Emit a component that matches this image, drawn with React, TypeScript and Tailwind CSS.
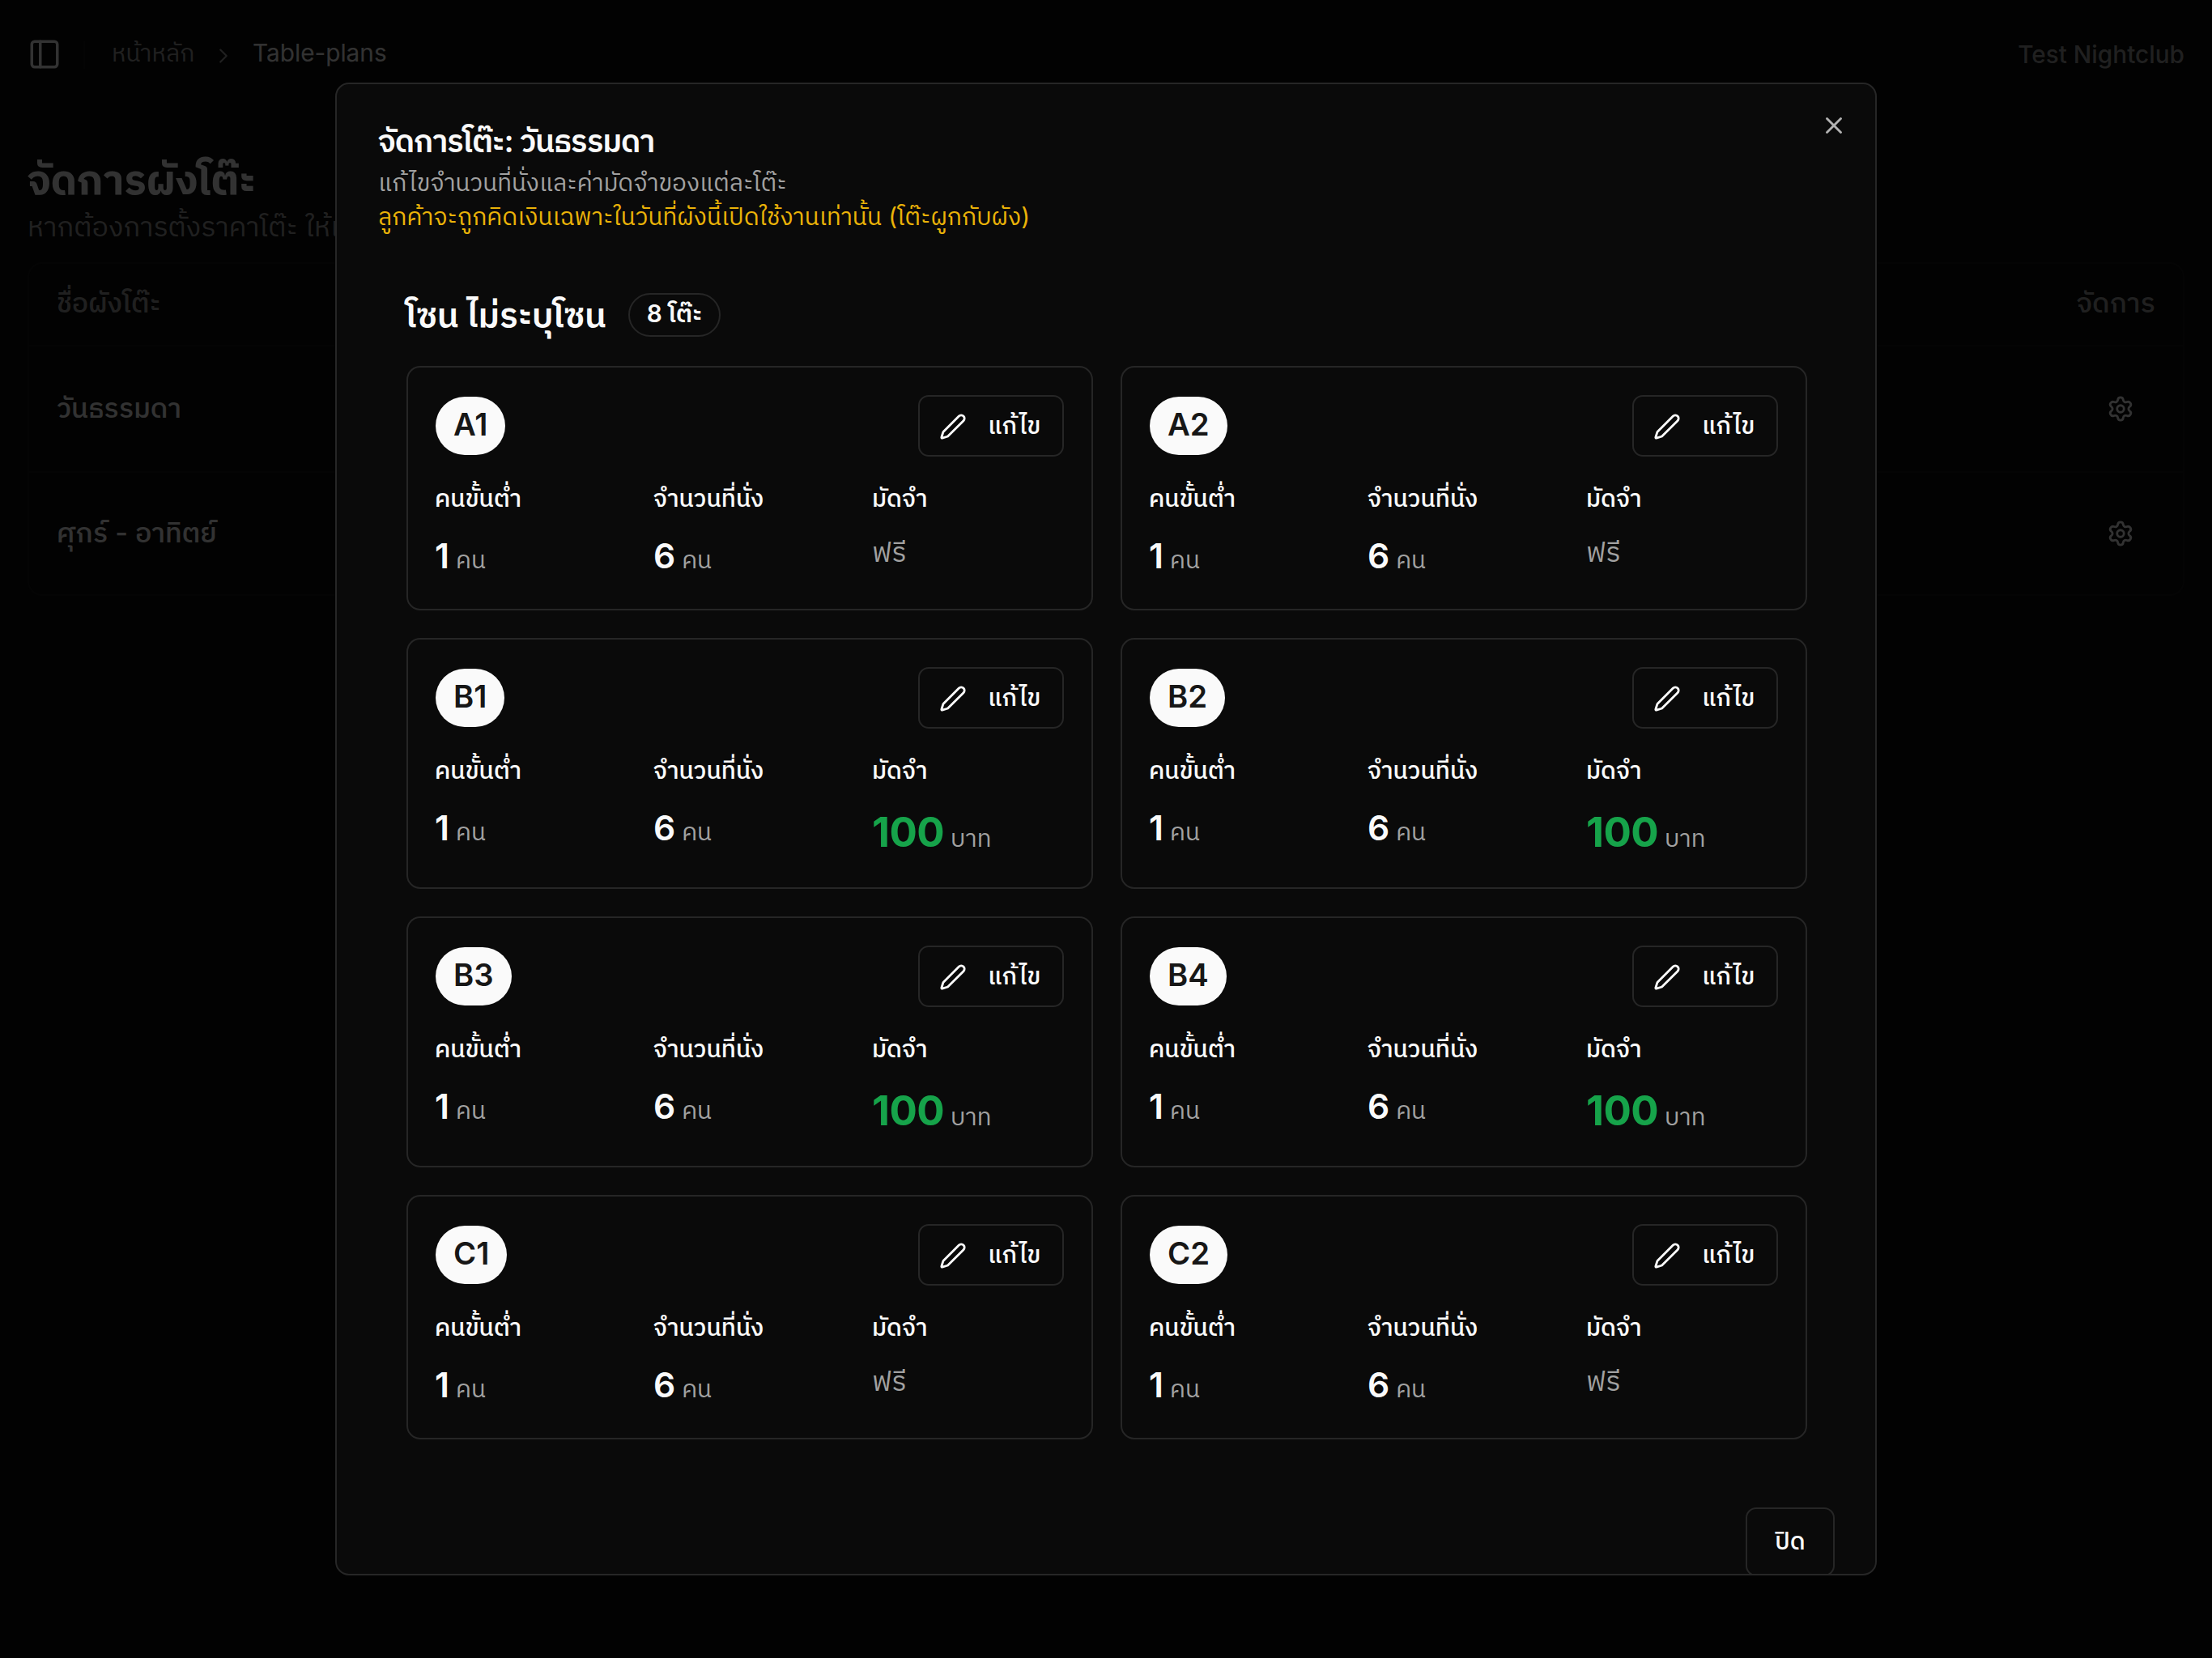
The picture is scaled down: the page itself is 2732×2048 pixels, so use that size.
import { ChevronRight, PanelLeft, Pen, Settings, X } from "lucide-react";

type TableItem = {
  name: string;
  minPeople: number;
  seats: number;
  deposit: number;
};

const tables: TableItem[] = [
  { name: "A1", minPeople: 1, seats: 6, deposit: 0 },
  { name: "A2", minPeople: 1, seats: 6, deposit: 0 },
  { name: "B1", minPeople: 1, seats: 6, deposit: 100 },
  { name: "B2", minPeople: 1, seats: 6, deposit: 100 },
  { name: "B3", minPeople: 1, seats: 6, deposit: 100 },
  { name: "B4", minPeople: 1, seats: 6, deposit: 100 },
  { name: "C1", minPeople: 1, seats: 6, deposit: 0 },
  { name: "C2", minPeople: 1, seats: 6, deposit: 0 },
];

const plans = ["วันธรรมดา", "ศุกร์ - อาทิตย์"];

const Header = () => (
  <header className="flex h-[134px] items-center justify-between px-[34px] text-[29.75px] leading-[42px]">
    <div className="flex items-center">
      <PanelLeft className="size-[42px]" />
      <div className="ml-[27px] mt-[2px] h-[34px] w-[2px] bg-[#171717]" />
      <span className="ml-[33px] w-[123px] whitespace-nowrap pb-[4px] text-[#a1a1a1]">หน้าหลัก</span>
      <ChevronRight className="mt-[4px] size-[30px] text-[#a1a1a1]" strokeWidth={1.75} />
      <span className="ml-[21px] pb-[4px]">Table-plans</span>
    </div>
    <span className="font-medium text-[#a1a1a1]">Test Nightclub</span>
  </header>
);

const PlansPage = () => (
  <main className="px-[34px] pt-[56px]">
    <h1 className="h-[63px] whitespace-nowrap text-[51px] font-bold leading-[63px] tracking-[-0.2px]">จัดการผังโต๊ะ</h1>
    <p className="h-[53px] whitespace-nowrap text-[34px] leading-[53px] text-[#a1a1a1]">
      หากต้องการตั้งราคาโต๊ะ ให้เ
    </p>
    <div className="mt-[18px] rounded-[18px] border-2 border-[#171717] text-[34px] font-medium">
      <div className="flex h-[102px] items-center justify-between border-b-2 border-[#171717] px-[34px] pb-[5px] text-[#a1a1a1]">
        <span>ชื่อผังโต๊ะ</span>
        <span>จัดการ</span>
      </div>
      {plans.map((plan) => (
        <div
          key={plan}
          className="flex h-[156px] items-center justify-between border-b-2 border-[#171717] px-[34px] last:h-[150px] last:border-b-0"
        >
          <span className="pb-[4px]">{plan}</span>
          <Settings className="mr-[26px] size-[34px]" />
        </div>
      ))}
    </div>
  </main>
);

const Label = ({ text }: { text: string }) => (
  <p className="h-[42px] whitespace-nowrap text-[29.75px] font-medium leading-[42px]">{text}</p>
);

const Count = ({ label, value }: { label: string; value: number }) => (
  <div>
    <Label text={label} />
    <p className="mt-[20px] flex items-baseline whitespace-nowrap leading-[61px]">
      <span className="text-[42.5px] font-semibold">{value}</span>
      <span className="ml-[8px] text-[29.75px] text-[#a1a1a1]">คน</span>
    </p>
  </div>
);

const TableCard = ({ table }: { table: TableItem }) => (
  <div className="rounded-[17px] border-2 border-[#262626] px-[34px] pt-[34px]">
    <div className="flex h-[76px] items-center justify-between">
      <span className="h-[72px] rounded-full bg-[#fafafa] px-[22px] text-[38.25px] font-semibold leading-[68px] text-[#171717]">
        {table.name}
      </span>
      <button className="flex h-[76px] w-[180px] items-center rounded-[13px] border-2 border-[#262626] pl-[24px] text-[29.75px] font-medium">
        <Pen className="mr-[26px] mt-[2px] size-[34px]" />
        <span className="whitespace-nowrap pb-[2px]">แก้ไข</span>
      </button>
    </div>
    <div className="-ml-px mr-px mt-[30px] grid grid-cols-3 gap-[34px]">
      <Count label="คนขั้นต่ำ" value={table.minPeople} />
      <Count label="จำนวนที่นั่ง" value={table.seats} />
      <div>
        <Label text="มัดจำ" />
        {table.deposit > 0 ? (
          <p className="mt-[20px] flex items-baseline whitespace-nowrap leading-[71px]">
            <span className="text-[51px] font-bold tracking-[-0.6px] text-[#16a34a]">{table.deposit}</span>
            <span className="ml-[8px] text-[29.75px] text-[#a1a1a1]">บาท</span>
          </p>
        ) : (
          <p className="mt-[20px] text-[34px] leading-[51px] text-[#a1a1a1]">ฟรี</p>
        )}
      </div>
    </div>
  </div>
);

const ManageDialog = () => (
  <div className="absolute left-[414px] top-[102px] flex h-[1844px] w-[1904px] flex-col overflow-hidden rounded-[17px] border-2 border-[#262626] bg-[#0a0a0a] px-[51px] pt-[46px]">
    <X className="absolute right-[34px] top-[34px] size-[34px] opacity-70" />
    <h2 className="h-[48px] whitespace-nowrap text-[38.25px] font-semibold leading-[48px] tracking-[-1.05px]">
      จัดการโต๊ะ: วันธรรมดา
    </h2>
    <p className="mt-[6px] h-[42px] whitespace-nowrap text-[29.75px] leading-[42px] text-[#a1a1a1]">
      แก้ไขจำนวนที่นั่งและค่ามัดจำของแต่ละโต๊ะ
    </p>
    <p className="h-[42px] whitespace-nowrap text-[29.75px] leading-[42px] text-[#eab308]">
      ลูกค้าจะถูกคิดเงินเฉพาะในวันที่ผังนี้เปิดใช้งานเท่านั้น (โต๊ะผูกกับผัง)
    </p>
    <section className="mt-[74px] pl-[35px] pr-[33px]">
      <div className="flex h-[54px] items-start">
        <h3 className="-ml-px w-[275px] whitespace-nowrap text-[42.5px] font-semibold leading-[53px] tracking-[-0.1px]">
          โซน ไม่ระบุโซน
        </h3>
        <span className="h-[54px] w-[114px] whitespace-nowrap rounded-full border-2 border-[#262626] text-center text-[29.75px] font-semibold leading-[46px]">
          8 โต๊ะ
        </span>
      </div>
      <div className="mt-[36px] grid grid-cols-2 grid-rows-[302px_310px_310px_302px] gap-[34px]">
        {tables.map((table) => (
          <TableCard key={table.name} table={table} />
        ))}
      </div>
    </section>
    <footer className="-mr-px mt-[84px] flex justify-end">
      <button className="flex h-[85px] w-[110px] shrink-0 items-center justify-center rounded-[13px] border-2 border-[#262626] pb-[3px] text-[29.75px] font-medium">
        ปิด
      </button>
    </footer>
  </div>
);

const App = () => {
  return (
    <div className="relative h-[2048px] w-[2732px] overflow-hidden bg-[#0a0a0a] font-['Inter','IBM_Plex_Sans_Thai','Noto_Sans_Thai','Noto_Sans',sans-serif] text-[#fafafa]">
      <Header />
      <PlansPage />
      <div className="absolute inset-0 bg-black/80" />
      <ManageDialog />
    </div>
  );
};

export default App;
